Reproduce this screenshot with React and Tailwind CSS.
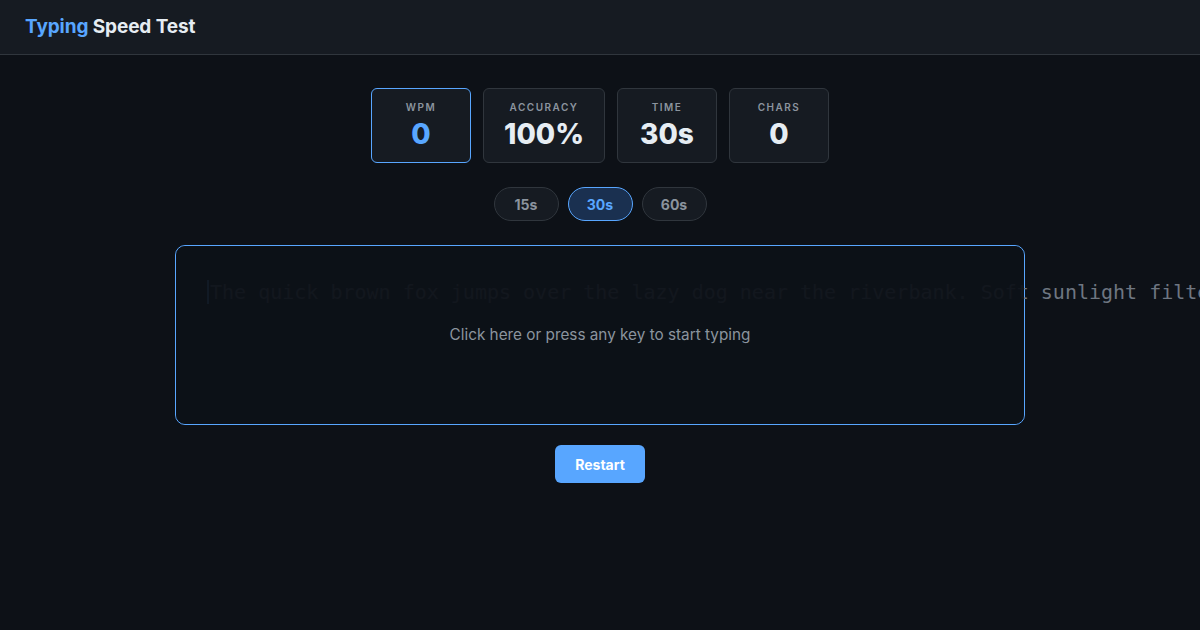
import React, { useState } from 'react';

const sans = { fontFamily: 'Inter, "Noto Sans", sans-serif' };

const stats = [
    { label: 'WPM', value: '0', active: true },
    { label: 'Accuracy', value: '100%' },
    { label: 'Time', value: '30s' },
    { label: 'Chars', value: '0' },
];

const durations = [15, 30, 60];

const passage = 'The quick brown fox jumps over the lazy dog near the riverbank. Soft sunlight filters through the tall trees as birds sing their morning songs.';

function StatCard({ label, value, active }) {
    return (
        <div className={`h-[75px] min-w-[100px] px-5 rounded-md border bg-[#161b22] flex flex-col items-center pt-[12px] ${active ? 'border-[#58a6ff]' : 'border-[#30363d]'}`}>
            <div className="text-[10px] leading-[12px] font-semibold uppercase tracking-[1.5px] text-[#8b949e]">{label}</div>
            <div className={`mt-[4px] text-[28px] leading-[34px] font-extrabold ${active ? 'text-[#58a6ff]' : 'text-[#e6edf3]'}`}>{value}</div>
        </div>
    );
}

export default function App() {
    const [duration, setDuration] = useState(30);

    return (
        <div className="min-h-[630px] bg-[#0d1117] text-[#e6edf3]" style={sans}>
            <header className="h-[55px] bg-[#161b22] border-b border-[#30363d] flex items-center px-[25px]">
                <h1 className="text-[19px] font-bold tracking-[-0.1px]">
                    <span className="text-[#58a6ff]">Typing</span> Speed Test
                </h1>
            </header>

            <main className="flex flex-col items-center pt-[33px]">
                <div className="flex gap-[12px]">
                    {stats.map((s) => (
                        <StatCard key={s.label} {...s} />
                    ))}
                </div>

                <div className="flex gap-[9px] mt-[24px]">
                    {durations.map((d) => (
                        <button
                            key={d}
                            onClick={() => setDuration(d)}
                            className={`w-[65px] h-[34px] rounded-full border text-[14px] font-bold ${duration === d ? 'bg-[#1a3050] border-[#58a6ff] text-[#58a6ff]' : 'bg-[#161b22] border-[#30363d] text-[#8b949e]'}`}
                        >
                            {d}s
                        </button>
                    ))}
                </div>

                <div className="relative mt-[24px] w-[850px] h-[180px] rounded-[10px] border border-[#58a6ff] bg-[#0f141b]">
                    <div
                        className="absolute left-[31px] top-[34px] whitespace-nowrap text-[20px] leading-[24px] text-[#6e7681]"
                        style={{ fontFamily: '"DejaVu Sans Mono", "Liberation Mono", monospace' }}
                    >
                        <span className="border-l-2 border-[#58a6ff] pl-[1px]">{passage}</span>
                    </div>
                    <div className="absolute inset-0 rounded-[10px] bg-[#0d1117]/[0.94] flex items-center justify-center">
                        <span className="text-[15.3px] text-[#8b949e]">Click here or press any key to start typing</span>
                    </div>
                </div>

                <button className="mt-[20px] w-[90px] h-[38px] rounded-md bg-[#58a6ff] text-white text-[14px] font-bold">
                    Restart
                </button>
            </main>
        </div>
    );
}
